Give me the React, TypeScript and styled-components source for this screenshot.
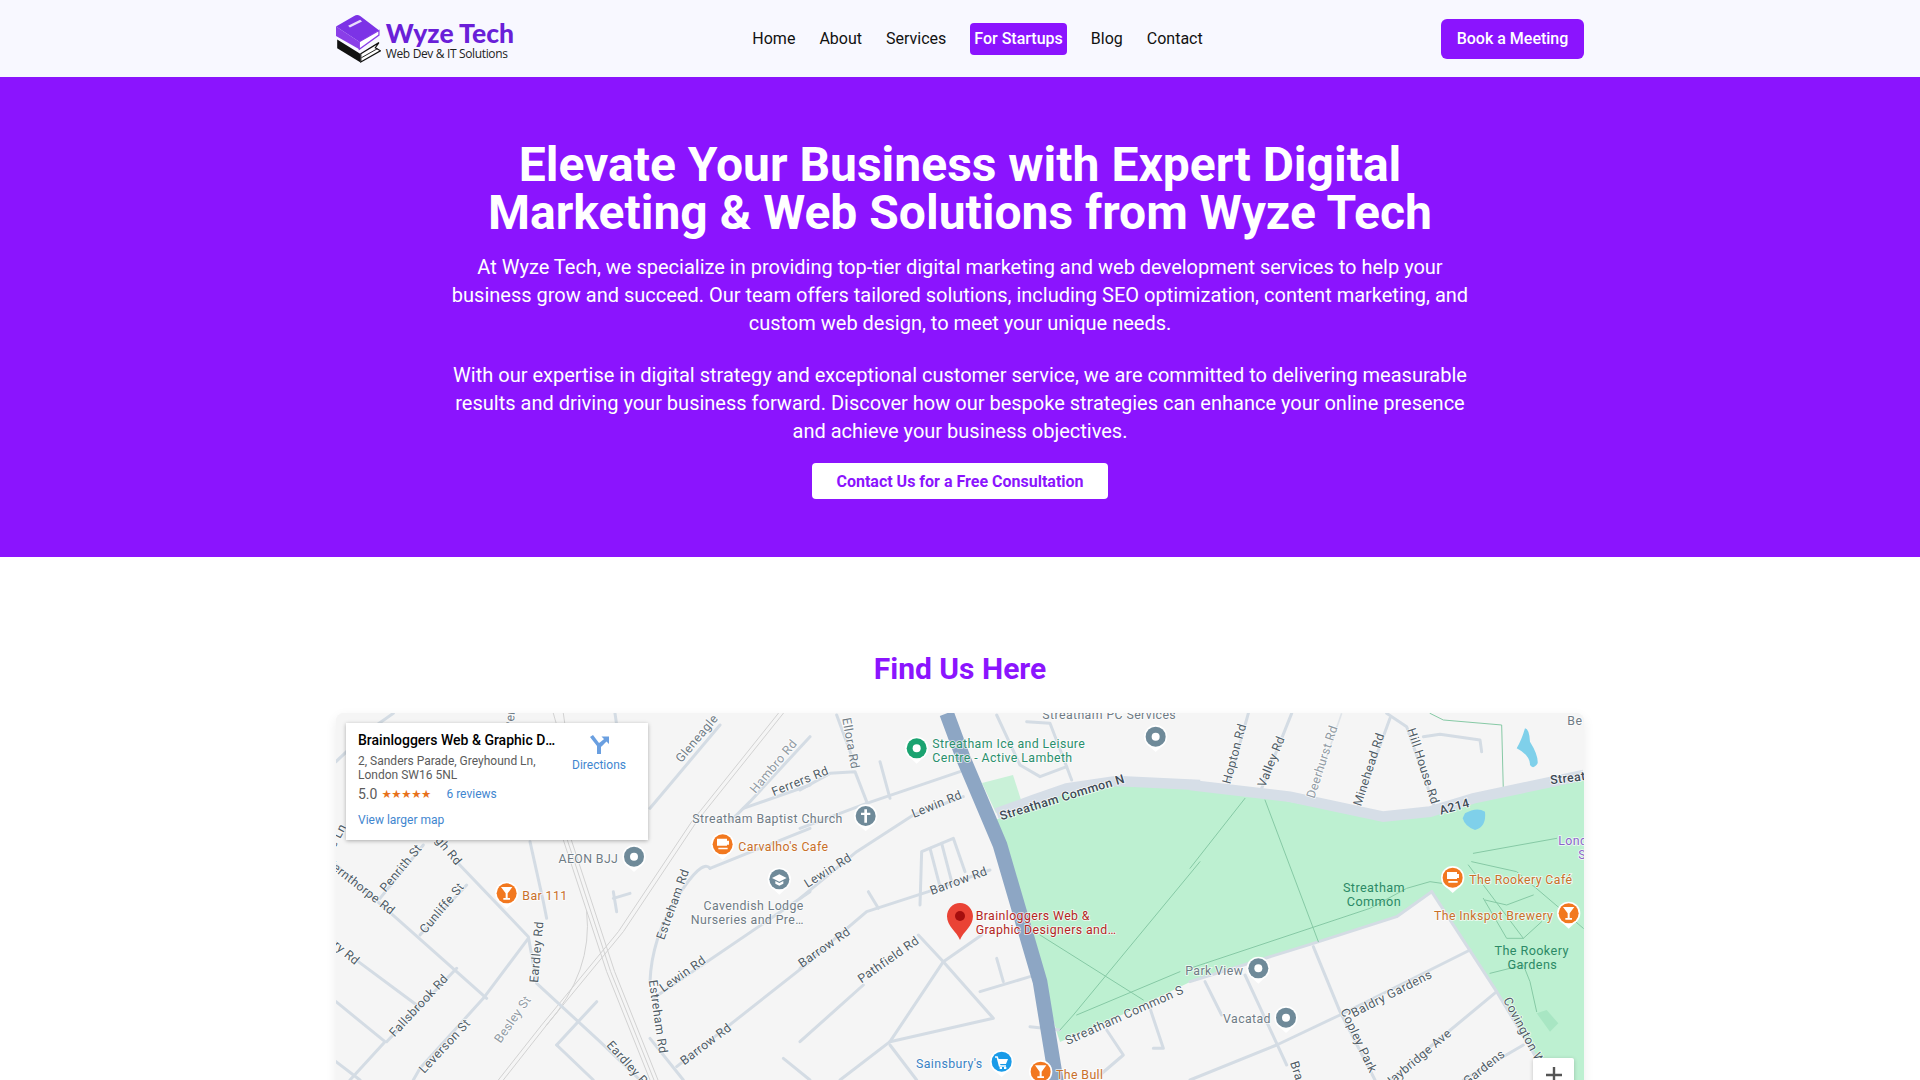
import React from 'react';
import styled, { createGlobalStyle } from 'styled-components';

const Global = createGlobalStyle`
  html, body { margin: 0; padding: 0; background: #fff; }
  body { font-family: Roboto, "Liberation Sans", sans-serif; color: #111; }
  * { box-sizing: border-box; }
`;

const PURPLE = '#8b14fe';

const Header = styled.header`
  height: 77px;
  background: #f8f8ff;
  display: flex;
  justify-content: center;
  align-items: center;
`;
const HeaderInner = styled.div`
  width: 1248px;
  display: flex;
  align-items: center;
  justify-content: space-between;
`;
const Logo = styled.a`
  display: flex;
  align-items: center;
  gap: 5px;
  width: 178px;
`;
const LogoText = styled.div`
  display: flex;
  flex-direction: column;
  padding-top: 3px;
`;
const LogoName = styled.span`
  font-family: Lato, sans-serif;
  font-weight: 900;
  font-size: 26.5px;
  line-height: 26px;
  color: #6a1fd8;
  white-space: nowrap;
`;
const LogoSub = styled.span`
  font-family: "Open Sans", sans-serif;
  font-size: 12px;
  line-height: 15px;
  letter-spacing: -0.35px;
  color: #222;
  white-space: nowrap;
`;
const Nav = styled.nav`
  display: flex;
  align-items: center;
  gap: 24px;
`;
const NavLink = styled.a<{ $active?: boolean }>`
  font-size: 16px;
  line-height: 24px;
  color: ${p => (p.$active ? '#fff' : '#111')};
  font-weight: ${p => (p.$active ? 500 : 400)};
  background: ${p => (p.$active ? PURPLE : 'transparent')};
  padding: ${p => (p.$active ? '4px' : '0')};
  border-radius: 4px;
`;
const BookButton = styled.button`
  width: 143px;
  height: 40px;
  border: 0;
  border-radius: 6px;
  background: ${PURPLE};
  color: #fff;
  font: 500 16px Roboto, sans-serif;
`;
const Hero = styled.section`
  background: ${PURPLE};
  height: 480px;
  padding-top: 64px;
  display: flex;
  flex-direction: column;
  align-items: center;
  color: #fff;
  text-align: center;
`;
const HeroTitle = styled.h1`
  margin: 0 0 16px;
  width: 1024px;
  font-size: 48px;
  line-height: 48px;
  font-weight: 700;
`;
const HeroText = styled.p`
  margin: 0 0 24px;
  width: 1024px;
  font-size: 20px;
  line-height: 28px;
  font-weight: 400;
`;
const HeroButton = styled.button`
  margin-top: -6px;
  width: 296px;
  height: 36px;
  border: 0;
  border-radius: 4px;
  background: #fff;
  color: ${PURPLE};
  font: 700 16px Roboto, sans-serif;
`;
const MapSection = styled.section`
  display: flex;
  flex-direction: column;
  align-items: center;
  padding-top: 92px;
`;
const SectionTitle = styled.h2`
  margin: 0 0 24px;
  color: ${PURPLE};
  font-size: 30px;
  line-height: 40px;
  font-weight: 700;
`;
const MapFrame = styled.div`
  position: relative;
  width: 1248px;
  height: 450px;
  background: #f5f5f5;
  border-radius: 8px;
  overflow: hidden;
  box-shadow: 0 4px 12px rgba(0, 0, 0, 0.08);
`;
const MapCanvas = styled.svg`
  display: block;
  font-family: Roboto, sans-serif;
`;
const InfoCard = styled.div`
  position: absolute;
  left: 10px;
  top: 10px;
  width: 302px;
  height: 117px;
  background: #fff;
  box-shadow: 0 1px 4px rgba(0, 0, 0, 0.3);
  padding: 9px 12px;
  display: flex;
  justify-content: space-between;
`;
const InfoMain = styled.div`
  width: 200px;
  display: flex;
  flex-direction: column;
`;
const PlaceName = styled.div`
  font-size: 14px;
  line-height: 17px;
  font-weight: 500;
  color: #000;
  white-space: nowrap;
  overflow: hidden;
  text-overflow: ellipsis;
`;
const Address = styled.div`
  margin-top: 5px;
  font-size: 12px;
  line-height: 14px;
  color: #5b5b5b;
`;
const RatingRow = styled.div`
  margin-top: 3px;
  display: flex;
  align-items: center;
  height: 18px;
  font-size: 14px;
  color: #5b5b5b;
`;
const Stars = styled.span`
  margin-left: 4px;
  font-size: 11.5px;
  letter-spacing: -0.4px;
  color: #e7711b;
  font-family: "DejaVu Sans", sans-serif;
  width: 65px;
`;
const InfoLink = styled.a`
  font-size: 12px;
  line-height: 14px;
  color: #3f86cf;
`;
const LargerLink = styled(InfoLink)`
  margin-top: 10px;
`;
const DirectionsBox = styled.div`
  display: flex;
  flex-direction: column;
  align-items: center;
  width: 60px;
  margin-right: 7px;
  padding-top: 3px;
  gap: 3px;
`;
const ZoomControl = styled.div`
  position: absolute;
  left: 1197px;
  top: 345px;
  width: 41px;
  height: 82px;
  background: #fff;
  box-shadow: 0 1px 4px rgba(0, 0, 0, 0.2);
  border-radius: 2px;
  display: flex;
  justify-content: center;
  padding-top: 8px;
`;
const Label = styled.text<{ $c: string; $w?: number }>`
  fill: ${p => p.$c};
  font-weight: ${p => p.$w || 400};
  font-size: 37px;
  letter-spacing: 1.2px;
  paint-order: stroke;
  stroke: rgba(255, 255, 255, 0.75);
  stroke-width: 5px;
`;
const Park = styled.text`
  fill: #2c8a66;
  font-size: 38px;
  letter-spacing: 1.2px;
`;

const ROAD = '#d4dce4';
const GRAY = '#6f7b85';
const DARK = '#505c66';
const LIGHT = '#909aa3';
const ORANGE = '#c8702a';
const GREEN = '#2a8f6c';
const BLUE = '#3a82c4';

type L = [string, number, number, number, string, ('start' | 'middle' | 'end')?, number?];

const labelsA: L[] = [
  ['Gleneagle', 1110, 108, -50, GRAY],
  ['Hambro Rd', 1340, 192, -50, LIGHT],
  ['Ferrers Rd', 1415, 240, -22, DARK],
  ['Streatham Baptist Church', 1087, 353, 0, GRAY, 'start'],
  ['AEON BJJ', 865, 473, 0, GRAY, 'end'],
  ["Carvalho's Cafe", 1225, 437, 0, ORANGE, 'start'],
  ['Bar 111', 577, 584, 0, ORANGE, 'start'],
  ['Cavendish Lodge', 1271, 614, 0, GRAY],
  ['Nurseries and Pre…', 1252, 656, 0, GRAY],
  ['Penrith St', 222, 497, -50, DARK],
  ['Fernthorpe Rd', 85, 555, 38, DARK],
  ['Cunliffe St', 345, 617, -50, DARK],
  ['Eardley Rd', 632, 742, -85, DARK],
  ['Fallsbrook Rd', 275, 910, -47, DARK],
  ['Leverson St', 353, 1032, -47, DARK],
  ['Besley St', 558, 950, -55, LIGHT],
  ['Eardley Rd', 890, 1090, 48, DARK],
  ['Estreham Rd', 1040, 602, -70, DARK],
  ['Estreham Rd', 972, 937, 82, DARK],
  ['Lewin Rd', 1065, 817, -35, DARK],
  ['Barrow Rd', 1135, 1027, -37, DARK],
  ['Ferry Rd', 20, 735, 40, DARK],
  ['Lawrie Ln', 10, 440, -62, DARK],
  ['Leigh Rd', 330, 425, 50, DARK],
  ['Pendle', 555, 15, -85, GRAY],
];
const labelsB: L[] = [
  ['Ellora Rd', 140, 117, 80, GRAY],
  ['Streatham Ice and Leisure', 397, 128, 0, GREEN, 'start'],
  ['Centre - Active Lambeth', 397, 170, 0, GREEN, 'start'],
  ['Streatham PC Services', 727, 43, 0, GRAY, 'start'],
  ['Streatham Common N', 790, 289, -17, '#3e4a55', 'middle', 500],
  ['Lewin Rd', 415, 309, -22, DARK],
  ['Lewin Rd', 90, 507, -32, DARK],
  ['Barrow Rd', 480, 539, -20, DARK],
  ['Barrow Rd', 80, 737, -35, DARK],
  ['Pathfield Rd', 272, 774, -35, DARK],
  ['Brainloggers Web &', 527, 645, 0, '#b3261e', 'start'],
  ['Graphic Designers and…', 527, 687, 0, '#b3261e', 'start'],
  ["Sainsbury's", 348, 1088, 0, BLUE, 'start'],
  ['The Bull', 768, 1121, 0, ORANGE, 'start'],
  ['Streatham Common S', 978, 942, -24, DARK],
];
const labelsC: L[] = [
  ['Hopton Rd', 145, 149, -75, DARK],
  ['Valley Rd', 255, 174, -68, DARK],
  ['Deerhurst Rd', 408, 174, -72, LIGHT],
  ['Minehead Rd', 548, 197, -72, DARK],
  ['Hill House Rd', 688, 187, 72, DARK],
  ['A214', 797, 317, -15, '#3e4a55', 'middle', 500],
  ['Streatham', 1082, 238, -7, '#3e4a55', 'start', 500],
  ['Be', 1132, 61, 0, GRAY, 'start'],
  ['London', 1105, 419, 0, '#8a63c9', 'start'],
  ['Sc', 1165, 461, 0, '#8a63c9', 'start'],
  ['The Rookery Café', 838, 536, 0, ORANGE, 'start'],
  ['The Inkspot Brewery', 1090, 645, 0, ORANGE, 'end'],
  ['Park View', 160, 809, 0, GRAY, 'end'],
  ['Vacatad', 243, 955, 0, GRAY, 'end'],
  ['Baldry Gardens', 610, 877, -27, DARK],
  ['Copley Park', 495, 1012, 65, DARK],
  ['Bradley', 320, 1135, 72, DARK],
  ['Haybridge Ave', 690, 1070, -40, DARK],
  ['Gardens', 890, 1097, -38, DARK],
  ['Covington Way', 1000, 1000, 62, DARK],
];

const roadsA = [
  'M18 480 L200 640 L470 880', 'M380 470 L595 695 L620 835 L810 1010 L930 1125',
  'M595 700 L460 880 L270 1090 L250 1125', 'M270 690 L410 540', 'M150 580 L280 420',
  'M170 1010 L380 790', 'M85 770 L260 900', 'M18 890 L165 1010 L60 1125', 'M18 1070 L90 1125',
  'M970 880 L1440 560', 'M1040 1085 L1440 770', 'M1140 490 L1440 370',
  'M960 830 Q965 700 1040 580 T1140 490', 'M960 1000 L1060 1125', 'M1240 310 L1440 240',
  'M960 310 L1170 60', 'M1200 350 L1260 290 L1440 95', 'M600 410 L640 590 L650 640',
  'M850 560 L860 620 M850 580 L900 565', 'M680 1020 L800 890', 'M680 1020 L790 1125',
  'M1360 1060 L1440 1125', 'M140 60 L190 25', 'M18 170 L60 130', 'M855 25 L860 60',
];
const railsA = [
  'M700 405 L830 800 L960 1125', 'M712 405 L842 800 L972 1125', 'M724 405 L854 800 L984 1125',
  'M1360 25 L1100 350 L880 680 L650 960 L520 1125', 'M1345 25 L1085 350 L865 680 L635 960 L505 1125',
  'M670 25 L680 60', 'M700 25 L705 60',
  'M770 620 Q790 800 650 960',
];
const roadsB = [
  'M0 580 L170 440 L340 330 L490 275', 'M0 790 L200 620 L385 560 L570 495', 'M0 370 L200 295 L480 200',
  'M0 255 L90 205 L165 200 L200 290', 'M110 30 L165 180', 'M240 170 L270 280',
  'M360 600 L365 440 L460 400 L495 500', 'M390 430 L420 545 M425 415 L455 530',
  'M0 1010 L190 840', 'M270 1010 L430 770 L545 690', 'M355 690 L430 770 L580 940 L270 1010',
  'M540 860 L690 815', 'M590 760 L610 830', 'M205 560 L235 610', 'M120 1125 L270 1010',
  'M270 1020 L350 1125', 'M690 965 L780 975', 'M920 975 L970 1050 L900 1110',
  'M1050 910 L1090 1030 L1060 1030', 'M590 30 L660 180 L720 215 L800 185 L815 225', 'M680 50 L750 55 L800 185',
];
const roadsC = [
  'M115 240 L175 25', 'M215 250 L305 25', 'M505 300 L600 40', 'M590 25 L650 65 L735 310',
  'M700 95 L750 88 L870 105 L875 140', 'M0 830 L370 715 L620 635 L725 560',
  'M725 560 L920 860 L1040 1060', 'M0 1125 L260 1020 L450 930 L840 735', 'M600 1125 L920 860',
  'M370 725 L450 920 L555 1125', 'M165 810 L290 1080', 'M45 830 L95 930', 'M1000 1020 L820 1125',
];
const pathsB = ['M1200 470 L820 930 L780 975', 'M720 690 L1030 885', 'M830 930 L1140 800'];
const pathsC = [
  'M165 280 L0 490', 'M225 285 L385 710', 'M0 790 L540 610 L650 550 L720 530 L755 535',
  'M850 445 L1100 400', 'M845 470 L980 500 L1180 670', 'M835 480 L1000 700', 'M880 580 L950 700 L1000 700 L1055 650',
  'M900 805 L1000 780 L1020 830 L1040 920', 'M720 25 L760 45 L935 60 L940 255', 'M885 585 L950 600 L1030 570',
];

type Kind = 'dot' | 'bar' | 'cafe' | 'cross' | 'school' | 'cart';

function Poi({ x, y, color, kind }: { x: number; y: number; color: string; kind: Kind }) {
  return (
    <g transform={`translate(${x} ${y})`}>
      <path d="M-24 24 L0 46 L24 24 Z" fill="#fff" />
      <circle r="35" fill="#fff" />
      <circle r="30" fill={color} />
      {kind === 'dot' && <circle r="12" fill="#fff" />}
      {kind === 'bar' && (
        <path d="M-17 -19 H17 L3 0 V14 H10 V19 H-10 V14 H-3 V0 Z" fill="#fff" />
      )}
      {kind === 'cafe' && (
        <path d="M-17 -17 H13 V-11 H19 V1 H13 V4 H-17 Z M-13 10 H15 V15 H-13 Z" fill="#fff" />
      )}
      {kind === 'cross' && <path d="M-4 -20 H4 V-10 H14 V-3 H4 V20 H-4 V-3 H-14 V-10 H-4 Z" fill="#fff" />}
      {kind === 'school' && (
        <path d="M0 -15 L22 -4 L0 7 L-22 -4 Z M-12 5 L0 11 L12 5 V13 L0 19 L-12 13 Z" fill="#fff" />
      )}
      {kind === 'cart' && (
        <path d="M-20 -16 H-12 L-9 -8 H19 L13 7 H-5 L-3 11 H13 V15 H-8 L-15 -12 H-20 Z M-6 16 H1 V22 H-6 Z M7 16 H14 V22 H7 Z" fill="#fff" />
      )}
    </g>
  );
}

function Labels({ items }: { items: L[] }) {
  return (
    <>
      {items.map(([t, x, y, r, c, a, w], i) => (
        <Label key={i} x={x} y={y} $c={c} $w={w} textAnchor={a || 'middle'}
          transform={r ? `rotate(${r} ${x} ${y})` : undefined}>{t}</Label>
      ))}
    </>
  );
}

function Lines({ d, color, width }: { d: string[]; color: string; width: number }) {
  return (
    <g fill="none" stroke={color} strokeWidth={width} strokeLinejoin="round" strokeLinecap="round">
      {d.map((p, i) => <path key={i} d={p} />)}
    </g>
  );
}

const scaleA = 'translate(-6 -8) scale(0.33333)';
const scaleB = 'translate(464 -8) scale(0.33333)';
const scaleC = 'translate(854 -8) scale(0.33333)';

function MapDrawing() {
  return (
    <MapCanvas width="1248" height="450" viewBox="0 0 1248 450">
      <rect width="1248" height="450" fill="#f5f5f5" />
      <path
        d="M659 107 L731 79 L781 72 L854 75 L950 88 L1047 107 L1137 85 L1248 62 L1248 450 L1205 450 L1201 345 L1161 279 L1096 179 L1061 204 L977 230 L854 269 L790 300 L724 329 L721 320 L697 232 L661 115 Z"
        fill="#bdf0d1"
      />
      <path d="M646 70 L677 62 L686 90 L660 100 Z" fill="#c9f1d8" />
      <g transform={scaleC}>
        <path d="M1005 70 Q1018 72 1020 110 Q1045 150 1043 175 Q1030 195 1020 180 Q1020 150 980 130 Q995 105 1005 70 Z" fill="#7fd0ea" />
        <path d="M825 325 Q860 305 885 320 Q890 365 855 375 Q825 365 818 340 Z" fill="#7fd0ea" />
        <path d="M1040 925 L1070 915 L1105 955 L1080 980 Z" fill="#a8e6c3" />
      </g>
      <g transform={scaleA}>
        <Lines d={railsA} color="#d2d2d2" width={3} />
        <Lines d={roadsA} color={ROAD} width={9} />
      </g>
      <g transform={scaleB}>
        <Lines d={roadsB} color={ROAD} width={9} />
        <Lines d={pathsB} color="#86c9a5" width={3} />
        <path d="M590 325 L700 285 L800 250 L950 228 L1200 240" fill="none" stroke="#d6dee7" strokeWidth={32} />
      </g>
      <g transform={scaleC}>
        <Lines d={roadsC} color={ROAD} width={9} />
        <path d="M370 270 L455 25" fill="none" stroke="#dfe4e9" strokeWidth={5} />
        <Lines d={pathsC} color="#86c9a5" width={3} />
        <path d="M0 240 L300 275 L580 335 L720 320 L850 280 L1182 210" fill="none" stroke="#d6dee7" strokeWidth={32} />
      </g>
      <g transform={scaleB}>
        <path d="M440 25 L490 160 L600 420 L720 830 L770 1135" fill="none" stroke="#8da6c4" strokeWidth={44} />
      </g>
      <g transform={scaleA}>
        <Labels items={labelsA} />
        <Poi x={912} y={455} color="#6f8a99" kind="dot" />
        <Poi x={530} y={565} color="#f2781f" kind="bar" />
        <Poi x={1178} y={418} color="#f2781f" kind="cafe" />
        <Poi x={1348} y={523} color="#6f8a99" kind="school" />
      </g>
      <g transform={scaleB}>
        <Labels items={labelsB} />
        <Poi x={350} y={130} color="#1aa370" kind="dot" />
        <Poi x={1067} y={95} color="#6f8a99" kind="dot" />
        <Poi x={197} y={333} color="#6f8a99" kind="cross" />
        <Poi x={605} y={1070} color="#1a9be8" kind="cart" />
        <Poi x={722} y={1100} color="#f2781f" kind="bar" />
        <path d="M480 594 C458 594 441 612 441 634 C441 664 470 680 480 705 C490 680 519 664 519 634 C519 612 502 594 480 594 Z" fill="#ea4335" />
        <circle cx="480" cy="633" r="15" fill="#a50e0e" />
      </g>
      <g transform={scaleC}>
        <Labels items={labelsC} />
        <Park x={552} y={561} textAnchor="middle">Streatham</Park>
        <Park x={552} y={603} textAnchor="middle">Common</Park>
        <Park x={1025} y={750} textAnchor="middle">The Rookery</Park>
        <Park x={1027} y={792} textAnchor="middle">Gardens</Park>
        <Poi x={788} y={518} color="#f2781f" kind="cafe" />
        <Poi x={1136} y={625} color="#f2781f" kind="bar" />
        <Poi x={205} y={790} color="#6f8a99" kind="dot" />
        <Poi x={288} y={938} color="#6f8a99" kind="dot" />
      </g>
    </MapCanvas>
  );
}

export default function App() {
  return (
    <>
      <Global />
      <Header>
        <HeaderInner>
          <Logo>
            <svg width="48" height="54" viewBox="48 35 148 162">
              <path d="M52 118 L128 165 V193 L52 147 Z" fill="#111" />
              <path d="M130 165 L190 128 L178 145 L195 155 L130 192 Z" fill="#fff" stroke="#111" strokeWidth="4" />
              <path d="M132 178 L185 148" stroke="#111" strokeWidth="3" />
              <path d="M125 125 L190 88 V103 L125 150 Z" fill="#fff" stroke="#8a3ee8" strokeWidth="4" />
              <path d="M48 75 V106 L125 150 V125 Z" fill="#8a3ee8" />
              <path d="M48 75 L108 40 Q118 34 128 40 L190 87 L125 125 Z" fill="#7c33e6" />
              <path d="M88 72 L128 52 L134 58 L94 78 Z" fill="#e8dcfb" />
            </svg>
            <LogoText>
              <LogoName>Wyze Tech</LogoName>
              <LogoSub>Web Dev &amp; IT Solutions</LogoSub>
            </LogoText>
          </Logo>
          <Nav>
            <NavLink>Home</NavLink>
            <NavLink>About</NavLink>
            <NavLink>Services</NavLink>
            <NavLink $active>For Startups</NavLink>
            <NavLink>Blog</NavLink>
            <NavLink>Contact</NavLink>
          </Nav>
          <BookButton>Book a Meeting</BookButton>
        </HeaderInner>
      </Header>
      <Hero>
        <HeroTitle>Elevate Your Business with Expert Digital Marketing &amp; Web Solutions from Wyze Tech</HeroTitle>
        <HeroText>At Wyze Tech, we specialize in providing top-tier digital marketing and web development services to help your business grow and succeed. Our team offers tailored solutions, including SEO optimization, content marketing, and custom web design, to meet your unique needs.</HeroText>
        <HeroText>With our expertise in digital strategy and exceptional customer service, we are committed to delivering measurable results and driving your business forward. Discover how our bespoke strategies can enhance your online presence and achieve your business objectives.</HeroText>
        <HeroButton>Contact Us for a Free Consultation</HeroButton>
      </Hero>
      <MapSection>
        <SectionTitle>Find Us Here</SectionTitle>
        <MapFrame>
          <MapDrawing />
          <InfoCard>
            <InfoMain>
              <PlaceName>Brainloggers Web &amp; Graphic Designers and Marketing</PlaceName>
              <Address>2, Sanders Parade, Greyhound Ln, London SW16 5NL</Address>
              <RatingRow>
                5.0<Stars>★★★★★</Stars><InfoLink>6 reviews</InfoLink>
              </RatingRow>
              <LargerLink>View larger map</LargerLink>
            </InfoMain>
            <DirectionsBox>
              <svg width="20" height="20" viewBox="0 0 20 20">
                <path d="M1 2 L4 0 L10 8 Q14 5 15 4 L12.5 1.5 H20 V9 L17.5 6.5 Q13 11 12 12 V19 H8 V11 Z" fill="#6a9fe0" />
              </svg>
              <InfoLink>Directions</InfoLink>
            </DirectionsBox>
          </InfoCard>
          <ZoomControl>
            <svg width="18" height="18" viewBox="0 0 18 18">
              <path d="M9 1 V17 M1 9 H17" stroke="#555" strokeWidth="2.4" />
            </svg>
          </ZoomControl>
        </MapFrame>
      </MapSection>
    </>
  );
}
